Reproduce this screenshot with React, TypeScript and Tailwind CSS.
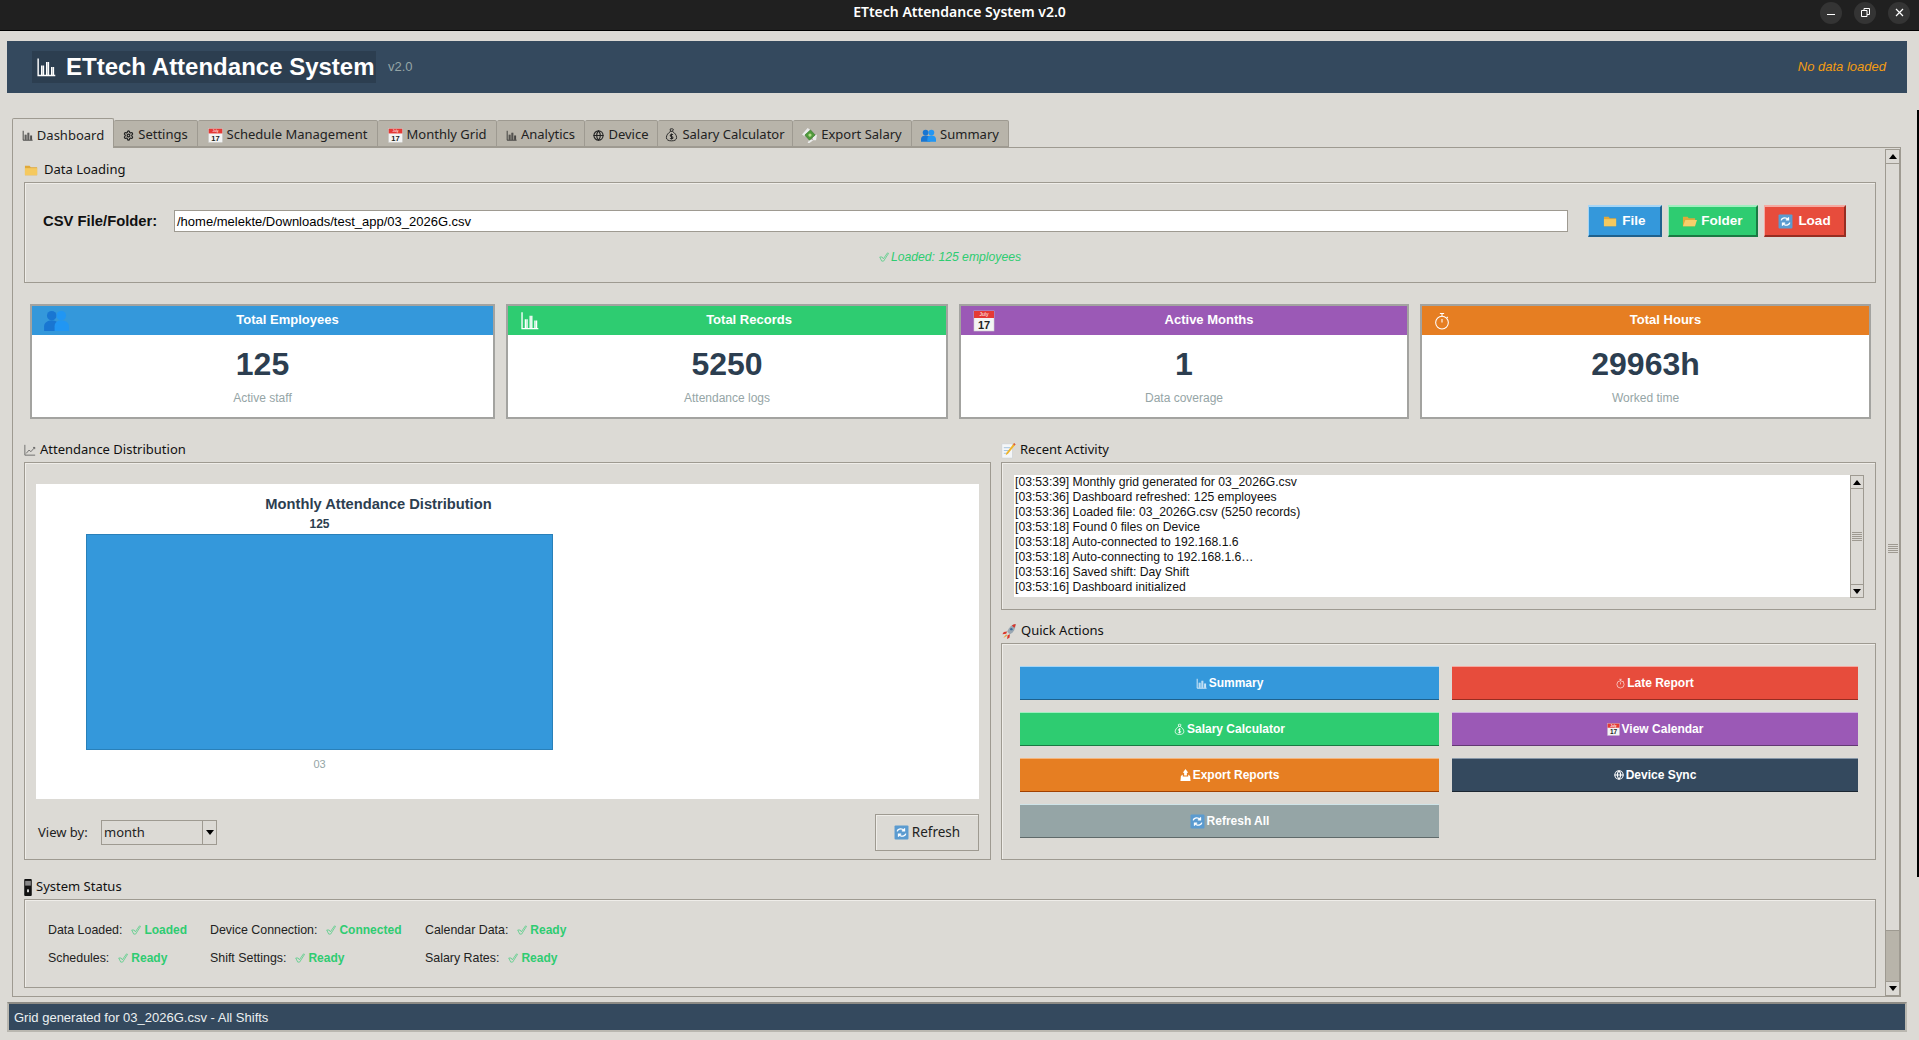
import type { ReactNode } from 'react';
import { Globe, Settings } from 'lucide-react';

const sans = "font-['Liberation_Sans',sans-serif]";
const ui = "font-['Noto_Sans',sans-serif]";

function BarsIcon({ className = 'w-[13px] h-[13px]' }: { className?: string }) {
  return (
    <svg viewBox="0 0 14 14" className={className} fill="none" stroke="currentColor" strokeWidth="1">
      <path d="M1.5 1v12h12M4 6v6.5M5.2 6v6.5M7.5 3.5v9M8.7 3.5v9M11 7v5.5M12.2 7v5.5" />
    </svg>
  );
}

function LineChartIcon() {
  return (
    <svg viewBox="0 0 14 14" className="w-[12px] h-[12px] text-[#555]" fill="none" stroke="currentColor" strokeWidth="0.9">
      <path d="M1 1v12h12M2.5 11 6 7l2 2 4.5-5M10.5 4h2v2" />
    </svg>
  );
}

function CalendarIcon({ className = 'w-[15px] h-[15px]' }: { className?: string }) {
  return (
    <svg viewBox="0 0 22 22" className={className}>
      <rect x="1" y="1" width="20" height="20" fill="#f4f4f4" stroke="#d0d0d0" strokeWidth="0.6" />
      <rect x="1" y="1" width="20" height="7" fill="#e53935" />
      <text x="11" y="6.4" fontSize="5" fill="#fff" textAnchor="middle" fontFamily="Liberation Sans">July</text>
      <text x="11" y="18.8" fontSize="11" fontWeight="700" fill="#222" textAnchor="middle" fontFamily="Liberation Sans">17</text>
    </svg>
  );
}

function BagIcon({ className = 'w-[13px] h-[14px]' }: { className?: string }) {
  return (
    <svg viewBox="0 0 14 15" className={className} fill="none" stroke="currentColor" strokeWidth="1">
      <path d="M5.5 1.2c1-.6 2.5-.6 3.5.2L8 3.6H6L5.5 1.2ZM6 3.6C3.4 5.4 1.5 7.6 1.5 10.2c0 2.6 2.2 3.6 5.5 3.6s5.5-1 5.5-3.6c0-2.6-1.9-4.8-4.5-6.6" />
      <path d="M8.6 7.2C8 6.6 5.6 6.6 5.6 8c0 1.5 3 .9 3 2.4 0 1.3-2.5 1.3-3.2.6M7 5.8v6.6" strokeWidth="1.1" />
    </svg>
  );
}

function MoneyWingsIcon() {
  return (
    <svg viewBox="0 0 16 16" className="w-[15px] h-[15px]">
      <path d="M0 7 6 0l3 2-6 7ZM6 16l2-4 4 1-4 3ZM11 9l5-2-1 6-3 0Z" fill="#ececec" />
      <path d="M3 7.5 9 2l5 5.5L8 13Z" fill="#4f9a3c" stroke="#2e6e26" strokeWidth="0.6" />
      <circle cx="8.5" cy="7.5" r="1.7" fill="#b7dd8e" />
    </svg>
  );
}

function PeopleIcon({ className = 'w-[15px] h-[13px]' }: { className?: string }) {
  return (
    <svg viewBox="0 0 26 22" className={className}>
      <circle cx="8" cy="6" r="5" fill="#1976d2" />
      <path d="M0 22v-5c0-4 4-6 8-6s8 2 8 6v5Z" fill="#1976d2" />
      <circle cx="18" cy="6" r="5" fill="#2196f3" />
      <path d="M11 22v-5c0-4 3-6 7-6s8 2 8 6v5Z" fill="#2196f3" />
    </svg>
  );
}

function FolderIcon({ open = false }: { open?: boolean }) {
  return (
    <svg viewBox="0 0 16 14" className="w-[15px] h-[14px]">
      <path d="M1 2.5h5l1.2 1.5H14v8.5H1Z" fill="#e0a93a" />
      {open ? <path d="M3.5 6H16l-2.2 6.5H1Z" fill="#f7cf6b" /> : <path d="M1 5h13v7.5H1Z" fill="#f5c95f" />}
    </svg>
  );
}

function RefreshIcon() {
  return (
    <svg viewBox="0 0 14 14" className="w-[15px] h-[15px]">
      <rect x="0.5" y="0.5" width="13" height="13" rx="1" fill="#5b9bd0" />
      <path d="M3 6c.4-2 3-3 5-2l1.4 1M9.8 3v2.5H7.3M11 8c-.4 2-3 3-5 2L4.6 9M4.2 11V8.5h2.5" fill="none" stroke="#fff" strokeWidth="1.2" />
    </svg>
  );
}

function MemoIcon() {
  return (
    <svg viewBox="0 0 16 18" className="w-[15px] h-[17px]">
      <rect x="1" y="2" width="11" height="15" fill="#f4f6f8" stroke="#c5ced6" strokeWidth="0.5" />
      <path d="M3 6h7M3 9h6M3 12h4" stroke="#8db4d6" strokeWidth="0.8" />
      <path d="M14 1l1.5 1.5-8 10L5 14l.8-2.5Z" fill="#f0b429" />
      <path d="M14 1l1.5 1.5-1 1.2L13 2.2Z" fill="#d9534f" />
    </svg>
  );
}

function RocketIcon() {
  return (
    <svg viewBox="0 0 16 18" className="w-[16px] h-[17px]">
      <path d="M15 1c-4 .5-7 3.500-9 8l3 3c4-2 6-6 6-11Z" fill="#9aa7b2" />
      <path d="M15 1c-1.500.2-3 .8-4 1.600L13.600 5C14.400 4 15 2.500 15 1Z" fill="#d9362b" />
      <path d="M6 9 2.500 9.500 1 12l4-.5ZM9 12l-.5 3.500L6 17l.5-4Z" fill="#d9362b" />
      <path d="M5 12 2 16l4-2.500Z" fill="#f0a030" />
      <circle cx="10.500" cy="6.500" r="1.300" fill="#3b6d9c" />
    </svg>
  );
}

function PagerIcon() {
  return (
    <svg viewBox="0 0 8 18" className="w-[8px] h-[17px]">
      <rect width="8" height="18" rx="1" fill="#111" />
      <rect x="1" y="2" width="6" height="5" fill="#888" />
      <rect x="3" y="11" width="2" height="3" fill="#ddd" />
    </svg>
  );
}

function CheckIcon() {
  return (
    <svg viewBox="0 0 11 11" className="w-[10px] h-[10px] shrink-0" fill="none" stroke="#2ecc71" strokeWidth="0.9" opacity="0.75">
      <path d="M.8 5.500h2.600l1.400 2 4.500-6.500 1.200.5-5.400 8.500H3Z" />
    </svg>
  );
}

function StopwatchIcon({ className = 'w-[15px] h-[17px]' }: { className?: string }) {
  return (
    <svg viewBox="0 0 15 17" className={className} fill="none" stroke="currentColor" strokeWidth="1">
      <circle cx="7.500" cy="10" r="6" />
      <path d="M7.500 4V2M5.500 1.500h4M7.500 6.500V10M12 4.500l1 1" />
    </svg>
  );
}

function ExportIcon() {
  return (
    <svg viewBox="0 0 12 14" className="w-[11px] h-[13px]" fill="#fff">
      <path d="M6 0 9 4H7.500v3h-3V4H3ZM1 7.500 3 6v2h6V6l2 1.500 .5 5.500H.5Z" />
    </svg>
  );
}

function LabelFrame({ label, icon, gap = 'gap-[4px]', className, children }: { label: string; icon?: ReactNode; gap?: string; className?: string; children: ReactNode }) {
  return (
    <div>
      <div className={`${ui} h-[20px] mb-[2px] flex items-center ${gap} text-[13px] text-[#111]`}>
        {icon}
        <span>{label}</span>
      </div>
      <div className={`border border-[#9e9a91] shadow-[inset_1px_1px_0_#efede9] ${className ?? ''}`}>{children}</div>
    </div>
  );
}

function Arrow({ up = false }: { up?: boolean }) {
  return (
    <svg viewBox="0 0 8 5" className="w-[8px] h-[5px]">
      <path d={up ? 'M0 5 4 0l4 5Z' : 'M0 0h8L4 5Z'} fill="#000" />
    </svg>
  );
}

function Grip() {
  return (
    <div className="flex flex-col gap-[1px] w-[10px]">
      {[0, 1, 2, 3, 4].map(i => (
        <div key={i} className="h-[1px] bg-[#9e9a91]" />
      ))}
    </div>
  );
}

const cards = [
  { title: 'Total Employees', value: '125', sub: 'Active staff', head: 'bg-[#3498db]', iw: 'w-[50px]', icon: <PeopleIcon className="w-[25px] h-[21px]" /> },
  { title: 'Total Records', value: '5250', sub: 'Attendance logs', head: 'bg-[#2ecc71]', iw: 'w-[44px]', icon: <BarsIcon className="w-[19px] h-[19px] text-white" /> },
  { title: 'Active Months', value: '1', sub: 'Data coverage', head: 'bg-[#9b59b6]', iw: 'w-[50px]', icon: <CalendarIcon className="w-[22px] h-[22px]" /> },
  { title: 'Total Hours', value: '29963h', sub: 'Worked time', head: 'bg-[#e67e22]', iw: 'w-[40px]', icon: <StopwatchIcon className="w-[16px] h-[18px] text-white" /> },
];

const tabs = [
  { name: 'Dashboard', w: 'w-[102px]', icon: <BarsIcon className="w-[11px] h-[11px] text-[#222]" /> },
  { name: 'Settings', w: 'w-[84px]', icon: <Settings size={11} strokeWidth={2.6} className="text-[#222]" /> },
  { name: 'Schedule Management', w: 'w-[180px]', icon: <CalendarIcon /> },
  { name: 'Monthly Grid', w: 'w-[119px]', icon: <CalendarIcon /> },
  { name: 'Analytics', w: 'w-[88px]', icon: <BarsIcon className="w-[11px] h-[11px] text-[#222]" /> },
  { name: 'Device', w: 'w-[73px]', icon: <Globe size={11} strokeWidth={2.4} className="text-[#222]" /> },
  { name: 'Salary Calculator', w: 'w-[135px]', icon: <BagIcon /> },
  { name: 'Export Salary', w: 'w-[119px]', icon: <MoneyWingsIcon /> },
  { name: 'Summary', w: 'w-[97px]', icon: <PeopleIcon /> },
];

const activity = [
  '[03:53:39] Monthly grid generated for 03_2026G.csv',
  '[03:53:36] Dashboard refreshed: 125 employees',
  '[03:53:36] Loaded file: 03_2026G.csv (5250 records)',
  '[03:53:18] Found 0 files on Device',
  '[03:53:18] Auto-connected to 192.168.1.6',
  '[03:53:18] Auto-connecting to 192.168.1.6…',
  '[03:53:16] Saved shift: Day Shift',
  '[03:53:16] Dashboard initialized',
];

const actions = [
  { label: 'Summary', cls: 'bg-[#3498db] border-t-[#a6d5f5] border-b-[#1f618d]', icon: <BarsIcon className="w-[11px] h-[11px] text-white" /> },
  { label: 'Late Report', cls: 'bg-[#e74c3c] border-t-[#f5a9a1] border-b-[#962d22]', icon: <StopwatchIcon className="w-[9px] h-[11px] text-white" /> },
  { label: 'Salary Calculator', cls: 'bg-[#2ecc71] border-t-[#a0eec0] border-b-[#1a7a43]', icon: <BagIcon className="w-[11px] h-[13px] text-white" /> },
  { label: 'View Calendar', cls: 'bg-[#9b59b6] border-t-[#d2b0e3] border-b-[#633974]', icon: <CalendarIcon className="w-[13px] h-[13px]" /> },
  { label: 'Export Reports', cls: 'bg-[#e67e22] border-t-[#f5b67e] border-b-[#a04000]', icon: <ExportIcon /> },
  { label: 'Device Sync', cls: 'bg-[#34495e] border-t-[#8697a8] border-b-[#1b2631]', icon: <Globe size={10} className="text-white" strokeWidth={2.5} /> },
  { label: 'Refresh All', cls: 'bg-[#95a5a6] border-t-[#cfe4e8] border-b-[#5f6a6a]', icon: <RefreshIcon /> },
];

const statusRows = [
  [['Data Loaded:', 'Loaded'], ['Device Connection:', 'Connected'], ['Calendar Data:', 'Ready']],
  [['Schedules:', 'Ready'], ['Shift Settings:', 'Ready'], ['Salary Rates:', 'Ready']],
];

export default function App() {
  return (
    <div className="relative w-[1919px] h-[1040px] overflow-hidden bg-[#dcdad5]">
      <div className="h-[31px] bg-[#202020] border-b border-black grid grid-cols-[1fr_auto_1fr] items-center">
        <div />
        <div className={`${ui} text-[14px] font-semibold text-white -mt-[7px]`}>ETtech Attendance System v2.0</div>
        <div className="flex justify-end items-center gap-[12px] pr-[9px] -mt-[5px] text-white">
          <div className="w-[22px] h-[22px] rounded-full bg-[#343434] flex items-center justify-center">
            <div className="w-[8px] h-[1px] bg-white mt-[3px]" />
          </div>
          <div className="w-[22px] h-[22px] rounded-full bg-[#343434] flex items-center justify-center">
            <svg viewBox="0 0 9 9" className="w-[9px] h-[9px]" fill="none" stroke="#fff" strokeWidth="1">
              <path d="M.5 2.500h5.500v6H.5ZM3 2.500V.5h5.500V6.500H6" />
            </svg>
          </div>
          <div className="w-[22px] h-[22px] rounded-full bg-[#343434] flex items-center justify-center">
            <svg viewBox="0 0 9 9" className="w-[9px] h-[9px]" fill="none" stroke="#fff" strokeWidth="1.2">
              <path d="m1 1 7 7M8 1 1 8" />
            </svg>
          </div>
        </div>
      </div>

      <div className={`${sans} ml-[7px] mt-[10px] w-[1900px] h-[52px] bg-[#34495e] flex items-center pl-[25px] pr-[21px]`}>
        <div className="h-[32px] w-[344px] bg-[#2c3e50] flex items-center gap-[10px] pl-[4px] text-white">
          <BarsIcon className="w-[20px] h-[20px]" />
          <span className="text-[24px] font-bold leading-none whitespace-nowrap">ETtech Attendance System</span>
        </div>
        <span className="ml-[12px] text-[13px] text-[#95a5a6]">v2.0</span>
        <span className="ml-auto text-[13px] italic text-[#f39c12]">No data loaded</span>
      </div>

      <div className={`${ui} ml-[12px] mt-[25px] h-[29px] flex items-end text-[13px] text-[#222]`}>
        {tabs.map((t, i) => (
          <div
            key={t.name}
            className={
              i === 0
                ? `${t.w} h-[30px] -mb-px pt-[4px] relative z-10 bg-[#dcdad5] border border-b-0 border-[#9e9a91] rounded-t-[2px] flex items-center justify-center gap-[4px]`
                : `${t.w} h-[27px] pt-[3px] bg-[#b8b4aa] border border-l-0 border-[#9e9a91] rounded-t-[2px] flex items-center justify-center gap-[4px]`
            }
          >
            {t.icon}
            <span className="whitespace-nowrap">{t.name}</span>
          </div>
        ))}
      </div>

      <div className="ml-[12px] w-[1889px] h-[850px] border border-[#9e9a91] flex">
        <div className="w-[1873px] pl-[11px] pt-[12px]">
          <div className="w-[1852px]">
            <LabelFrame label="Data Loading" icon={<FolderIcon />} gap="gap-[5px]" className="h-[101px] pt-[22px]">
              <div className={`${sans} flex items-center`}>
                <div className="w-[149px] pl-[18px] text-[14.8px] font-bold text-[#111]">CSV File/Folder:</div>
                <div className="w-[1394px] h-[22px] bg-white border border-[#9e9a91] pl-[2px] pt-[1px] flex items-center text-[13px] text-black">
                  /home/melekte/Downloads/test_app/03_2026G.csv
                </div>
                <button className="ml-[20px] w-[74px] h-[32px] bg-[#3498db] border border-t-2 border-r-2 border-b-2 border-[#1f618d] border-t-[#a6d5f5] border-l-[#a6d5f5] text-[13.5px] font-bold text-white flex items-center justify-center gap-[4px]">
                  <FolderIcon />
                  File
                </button>
                <button className="ml-[6px] w-[90px] h-[32px] bg-[#2ecc71] border border-t-2 border-r-2 border-b-2 border-[#1a7a43] border-t-[#a0eec0] border-l-[#a0eec0] text-[13.5px] font-bold text-white flex items-center justify-center gap-[4px]">
                  <FolderIcon open />
                  Folder
                </button>
                <button className="ml-[6px] w-[82px] h-[32px] bg-[#e74c3c] border border-t-2 border-r-2 border-b-2 border-[#962d22] border-t-[#f5a9a1] border-l-[#f5a9a1] text-[13.5px] font-bold text-white flex items-center justify-center gap-[5px]">
                  <RefreshIcon />
                  Load
                </button>
              </div>
              <div className={`${sans} mt-[12px] h-[16px] flex items-center justify-center gap-[2px] text-[12.2px] italic text-[#2ecc71]`}>
                <CheckIcon />
                Loaded: 125 employees
              </div>
            </LabelFrame>

            <div className={`${sans} mt-[21px] ml-[6px] grid grid-cols-[465px_442px_450px_451px] gap-x-[11px]`}>
              {cards.map(c => (
                <div key={c.title} className="h-[115px] bg-white border-2 border-[#a3a3a0]">
                  <div className={`${c.head} h-[29px] pb-[2px] flex items-center`}>
                    <div className={`${c.iw} pl-[12px] pt-[2px] shrink-0`}>{c.icon}</div>
                    <div className="flex-1 text-center text-[13px] font-bold text-white">{c.title}</div>
                  </div>
                  <div className="pt-[11px] text-center">
                    <div className="text-[32px] leading-[37px] font-bold text-[#2c3e50]">{c.value}</div>
                    <div className="mt-[7px] text-[12px] leading-[16px] text-[#95a5a6]">{c.sub}</div>
                  </div>
                </div>
              ))}
            </div>

            <div className="mt-[21px] grid grid-cols-[967px_875px] gap-x-[10px]">
              <LabelFrame label="Attendance Distribution" icon={<LineChartIcon />} className="h-[398px] pt-[21px] pl-[11px] pr-[11px]">
                <div className={`${sans} h-[315px] bg-white flex flex-col`}>
                  <div className="h-[29px] pt-[10px] text-center text-[14.7px] leading-[20px] font-bold text-[#2c3e50] w-[685px]">
                    Monthly Attendance Distribution
                  </div>
                  <div className="ml-[50px] w-[467px] flex flex-col items-center">
                    <div className="mt-[4px] text-[12px] leading-[14px] font-bold text-[#2c3e50]">125</div>
                    <div className="mt-[3px] w-[467px] h-[216px] bg-[#3498db] border border-[#2980b9]" />
                    <div className="mt-[8px] text-[11px] leading-[13px] text-[#95a5a6]">03</div>
                  </div>
                </div>
                <div className={`${ui} mt-[15px] h-[37px] flex items-center text-[13px] text-[#222]`}>
                  <span className="ml-[2px] w-[63px]">View by:</span>
                  <div className="w-[116px] h-[25px] bg-[#dcdad5] border border-[#9e9a91] flex items-center">
                    <span className="flex-1 pl-[2px]">month</span>
                    <div className="w-[14px] h-full border-l border-[#9e9a91] flex items-center justify-center">
                      <Arrow />
                    </div>
                  </div>
                  <button className="ml-auto w-[104px] h-[37px] border border-[#9e9a91] shadow-[inset_1px_1px_0_#efede9] flex items-center justify-center gap-[3px] text-[13.5px]">
                    <RefreshIcon />
                    Refresh
                  </button>
                </div>
              </LabelFrame>

              <div>
                <LabelFrame label="Recent Activity" icon={<MemoIcon />} className="h-[148px] pl-[12px] pt-[12px]">
                  <div className="flex h-[123px]">
                    <div className={`${sans} w-[836px] h-[122px] bg-white pl-[1px] text-[12.2px] leading-[15px] text-[#111]`}>
                      {activity.map(line => (
                        <div key={line}>{line}</div>
                      ))}
                    </div>
                    <div className="w-[14px] border border-[#9e9a91] flex flex-col">
                      <div className="h-[13px] border-b border-[#9e9a91] flex items-center justify-center"><Arrow up /></div>
                      <div className="flex-1 flex items-center justify-center"><Grip /></div>
                      <div className="h-[13px] border-t border-[#9e9a91] flex items-center justify-center"><Arrow /></div>
                    </div>
                  </div>
                </LabelFrame>
                <div className="mt-[11px]">
                  <LabelFrame label="Quick Actions" icon={<RocketIcon />} className="h-[217px] pt-[22px] pl-[18px]">
                    <div className={`${sans} grid grid-cols-[419px_406px] gap-x-[13px] gap-y-[12px]`}>
                      {actions.map(a => (
                        <button key={a.label} className={`${a.cls} h-[34px] border-y flex items-center justify-center gap-[2px] text-[12px] font-bold text-white`}>
                          {a.icon}
                          {a.label}
                        </button>
                      ))}
                    </div>
                  </LabelFrame>
                </div>
              </div>
            </div>

            <div className="mt-[17px]">
              <LabelFrame label="System Status" icon={<PagerIcon />} className="h-[89px] pt-[22px] pl-[23px]">
                <div className={`${sans} flex flex-col gap-y-[12px] text-[12.4px] leading-[16px] text-[#222]`}>
                  {statusRows.map((row, i) => (
                    <div key={i} className="grid grid-cols-[162px_215px_auto]">
                      {row.map(([label, value]) => (
                        <div key={label} className="flex items-center gap-[9px]">
                          <span>{label}</span>
                          <span className="flex items-center gap-[3px] text-[12px] font-bold text-[#2ecc71]">
                            <CheckIcon />
                            {value}
                          </span>
                        </div>
                      ))}
                    </div>
                  ))}
                </div>
              </LabelFrame>
            </div>
          </div>
        </div>

        <div className="mt-[1px] w-[15px] h-[847px] border border-[#9e9a91] flex flex-col">
          <div className="h-[14px] border-b border-[#9e9a91] flex items-center justify-center"><Arrow up /></div>
          <div className="h-[765px] mt-[2px] border-b border-[#9e9a91] flex items-center justify-center"><Grip /></div>
          <div className="flex-1 bg-[#b8b4aa]" />
          <div className="h-[14px] border-t border-[#9e9a91] flex items-center justify-center"><Arrow /></div>
        </div>
      </div>

      <div className={`${sans} ml-[7px] mt-[5px] w-[1900px] h-[30px] bg-[#34495e] border-2 border-[#b9b7b0] border-t-[#8d8b85] flex items-center pl-[5px] pt-[1px] text-[13px] text-[#ecf0f1]`}>
        Grid generated for 03_2026G.csv - All Shifts
      </div>

      <div className="absolute right-0 top-[110px] w-[2px] h-[767px] bg-black" />
    </div>
  );
}
